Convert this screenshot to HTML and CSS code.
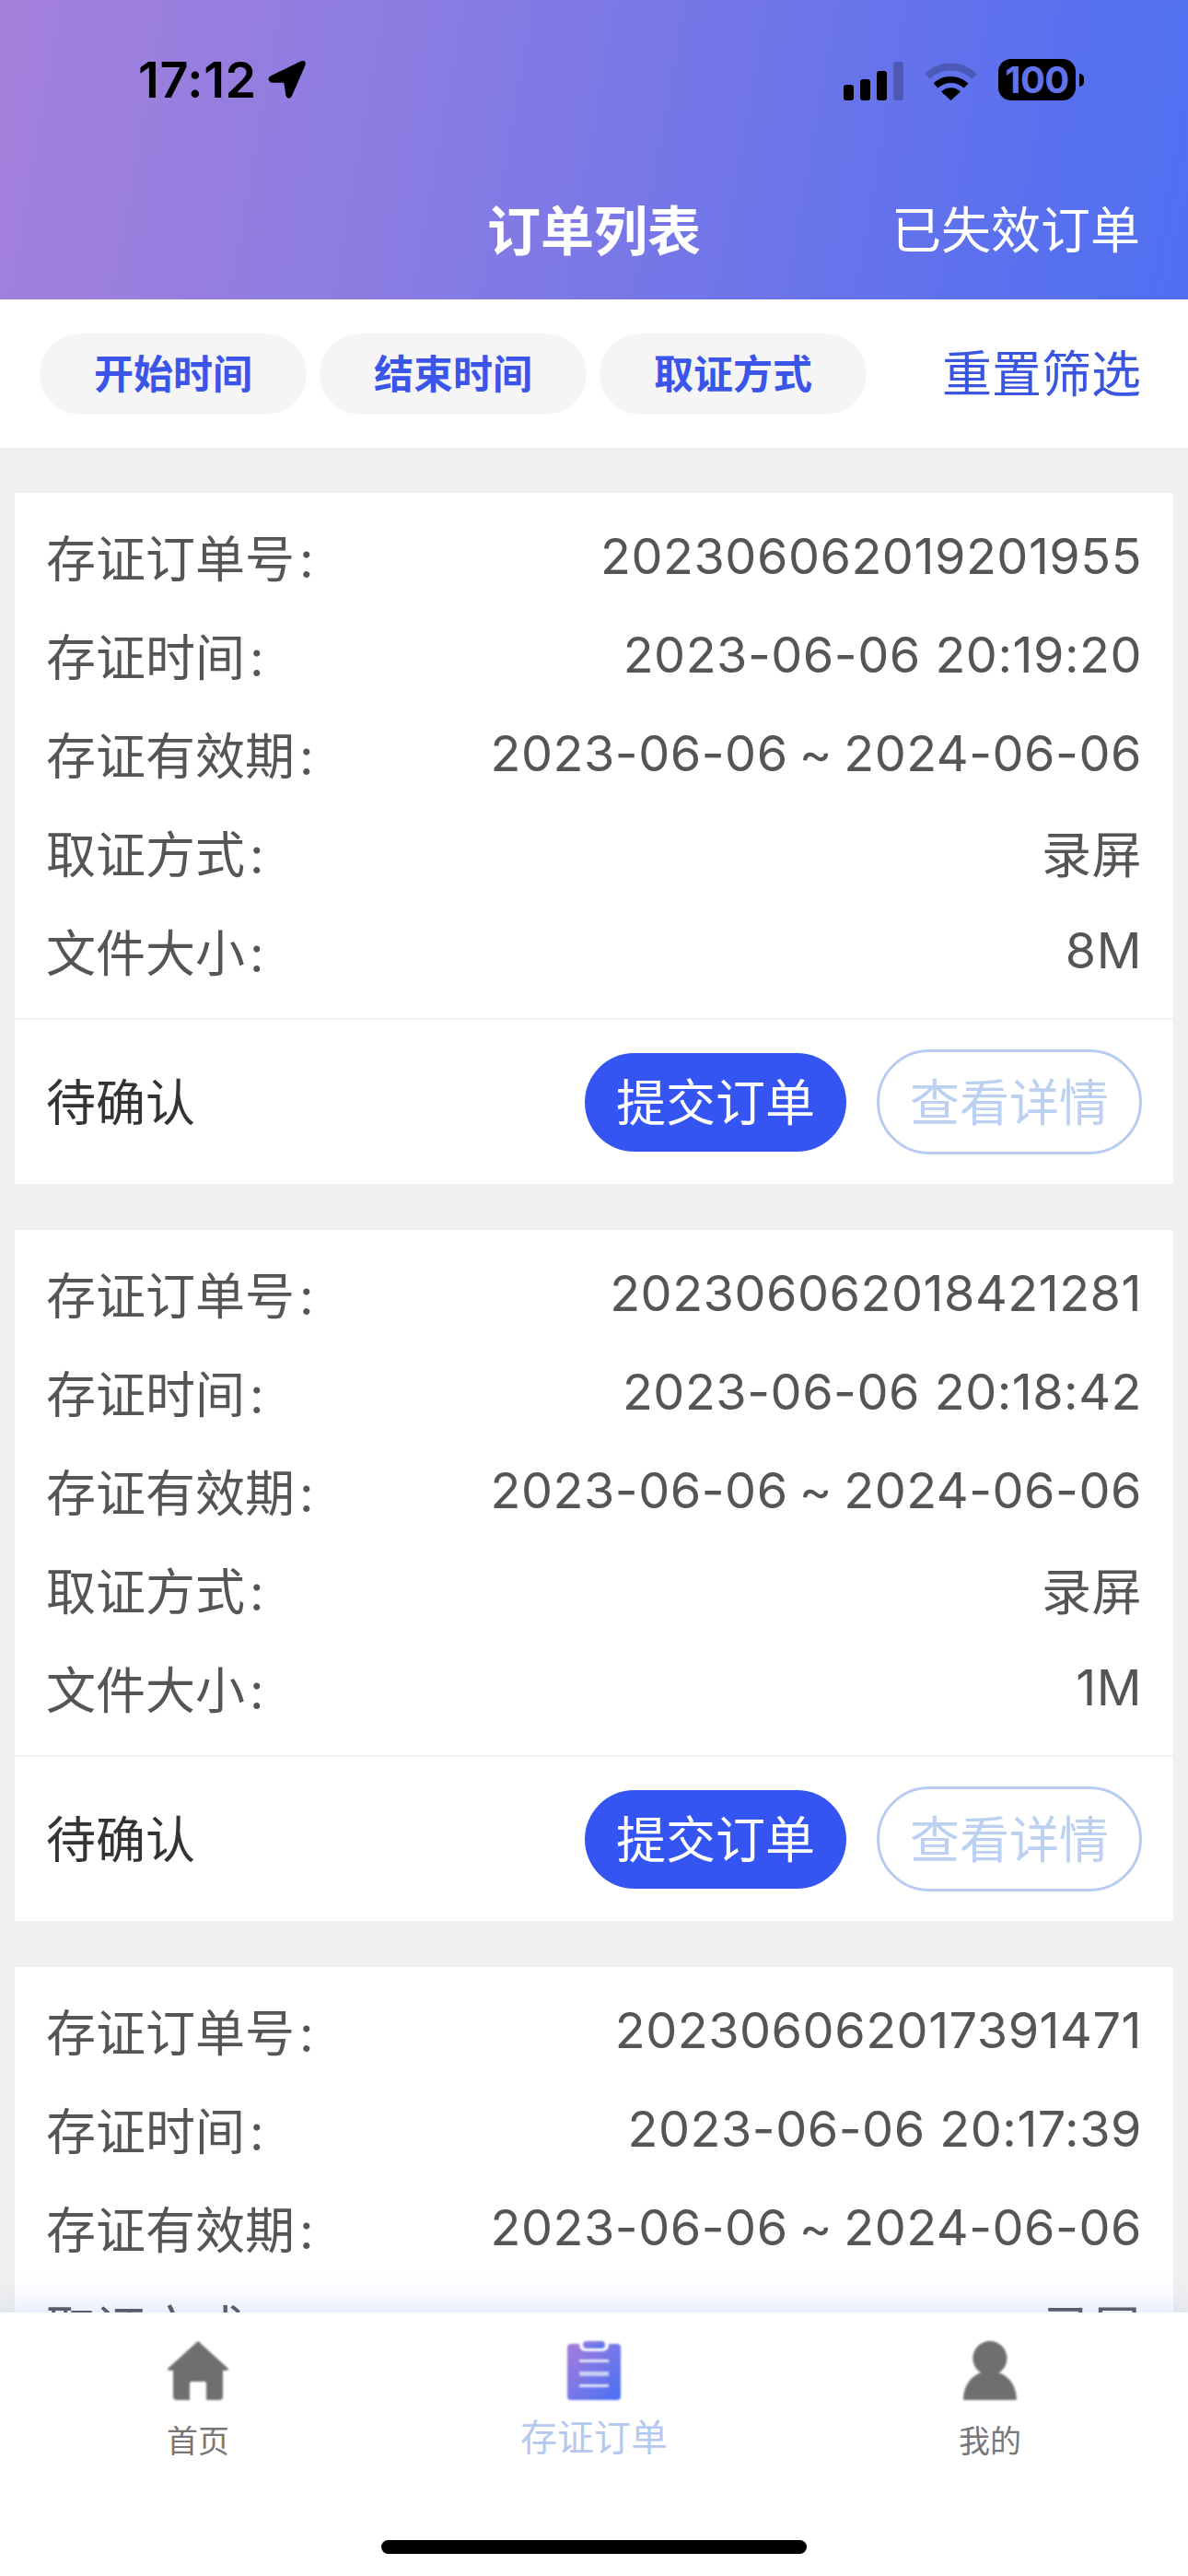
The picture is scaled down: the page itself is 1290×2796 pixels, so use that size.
FILE: index.html
```html
<!DOCTYPE html>
<html lang="zh-CN">
<head>
<meta charset="utf-8">
<title>订单列表</title>
<link rel="stylesheet" href="styles.css">
</head>
<body>
<div class="app">
  <header class="header">
    <div class="status">
      <div class="status-left">
        <span class="time">17:12</span>
        <svg class="arrow" viewBox="0 0 40 40"><path d="M3 16.5 L34 1.5 Q40 -0.5 38.5 5.5 L25 36.5 Q21.5 41.5 19 36 L17 23 L4.5 23 Q-1 20.5 3 16.5Z"/></svg>
      </div>
      <div class="status-right">
        <div class="signal">
          <i class="bar b1"></i><i class="bar b2"></i><i class="bar b3"></i><i class="bar b4"></i>
        </div>
        <svg class="wifi" viewBox="0 0 57 42"><path class="wifi-off" d="M3 16 A36 36 0 0 1 54 16"/><path class="wifi-on" d="M12 26 A24 24 0 0 1 45 26"/><path d="M28.5 42 L18 32.5 A15 15 0 0 1 39 32.5 Z"/></svg>
        <div class="battery"><span class="battery-body">100</span><i class="battery-tip"></i></div>
      </div>
    </div>
    <div class="nav">
      <span></span>
      <h1 class="title">订单列表</h1>
      <a class="nav-link">已失效订单</a>
    </div>
  </header>

  <div class="filters">
    <div class="pills">
      <button class="pill">开始时间</button>
      <button class="pill">结束时间</button>
      <button class="pill">取证方式</button>
    </div>
    <a class="reset">重置筛选</a>
  </div>

  <main class="list">
    <article class="card">
      <div class="rows">
        <div class="row"><span>存证订单号<b class="colon">:</b></span><span class="val">202306062019201955</span></div>
        <div class="row"><span>存证时间<b class="colon">:</b></span><span class="val">2023-06-06 20:19:20</span></div>
        <div class="row"><span>存证有效期<b class="colon">:</b></span><span class="val">2023-06-06 <span class="tilde">~</span> 2024-06-06</span></div>
        <div class="row"><span>取证方式<b class="colon">:</b></span><span class="val">录屏</span></div>
        <div class="row"><span>文件大小<b class="colon">:</b></span><span class="val">8M</span></div>
      </div>
      <div class="foot">
        <span class="state">待确认</span>
        <div class="actions"><button class="btn primary">提交订单</button><button class="btn ghost">查看详情</button></div>
      </div>
    </article>
    <article class="card">
      <div class="rows">
        <div class="row"><span>存证订单号<b class="colon">:</b></span><span class="val">202306062018421281</span></div>
        <div class="row"><span>存证时间<b class="colon">:</b></span><span class="val">2023-06-06 20:18:42</span></div>
        <div class="row"><span>存证有效期<b class="colon">:</b></span><span class="val">2023-06-06 <span class="tilde">~</span> 2024-06-06</span></div>
        <div class="row"><span>取证方式<b class="colon">:</b></span><span class="val">录屏</span></div>
        <div class="row"><span>文件大小<b class="colon">:</b></span><span class="val">1M</span></div>
      </div>
      <div class="foot">
        <span class="state">待确认</span>
        <div class="actions"><button class="btn primary">提交订单</button><button class="btn ghost">查看详情</button></div>
      </div>
    </article>
    <article class="card">
      <div class="rows">
        <div class="row"><span>存证订单号<b class="colon">:</b></span><span class="val">202306062017391471</span></div>
        <div class="row"><span>存证时间<b class="colon">:</b></span><span class="val">2023-06-06 20:17:39</span></div>
        <div class="row"><span>存证有效期<b class="colon">:</b></span><span class="val">2023-06-06 <span class="tilde">~</span> 2024-06-06</span></div>
        <div class="row"><span>取证方式<b class="colon">:</b></span><span class="val">录屏</span></div>
      </div>
    </article>
  </main>

  <nav class="tabbar">
    <div class="tabs">
      <div class="tab">
        <svg class="tab-icon" viewBox="0 0 66 64"><path d="M33 0 L66 30 Q66 32 63 32 L60 32 L60 60 Q60 64 56 64 L42 64 L42 46 Q42 44 40 44 L26 44 Q24 44 24 46 L24 64 L10 64 Q6 64 6 60 L6 32 L3 32 Q0 32 0 30Z"/></svg>
        <span class="tab-label">首页</span>
      </div>
      <div class="tab">
        <svg class="tab-icon" viewBox="0 0 58 64">
          <defs><linearGradient id="clip" x1="0" y1="0" x2="1" y2="1"><stop offset="0" stop-color="#a67edb"/><stop offset="1" stop-color="#4670f5"/></linearGradient></defs>
          <rect x="17" y="0" width="24" height="8" rx="4" fill="url(#clip)"/>
          <path fill="url(#clip)" d="M4 3 L13 3 Q13 11 20 11 L38 11 Q45 11 45 3 L54 3 Q58 3 58 7 L58 60 Q58 64 54 64 L4 64 Q0 64 0 60 L0 7 Q0 3 4 3Z"/>
          <rect x="13" y="20" width="32" height="3" fill="#e3e6fa"/><rect x="13" y="33" width="32" height="5" fill="#c9d0f5"/><rect x="13" y="47" width="32" height="3" fill="#e3e6fa"/>
        </svg>
        <span class="tab-label active">存证订单</span>
      </div>
      <div class="tab">
        <svg class="tab-icon" viewBox="0 0 56 62"><circle cx="28" cy="18" r="18"/><path d="M0 62 C0 44 12 34 21 33 L35 33 C44 34 56 44 56 62Z"/></svg>
        <span class="tab-label">我的</span>
      </div>
    </div>
    <div class="home-bar"></div>
  </nav>
</div>
</body>
</html>
```
FILE: styles.css
```css
* { box-sizing: border-box; }
html, body { margin: 0; padding: 0; }
body { font-family: Inter, "Noto Sans CJK SC", sans-serif; background: #f0f0f0; }
.app { width: 1290px; height: 2796px; display: flex; flex-direction: column; overflow: hidden; }

.header { height: 325px; flex: none; background: linear-gradient(100deg, #a580dc 0%, #8a7ce2 35%, #5a70ee 85%, #4f70f2 100%); padding-top: 64px; }
.status { display: flex; justify-content: space-between; align-items: center; height: 45px; padding: 0 113px 0 150px; color: #000; }
.status-left { display: flex; align-items: center; gap: 11px; }
.time { font-size: 54px; font-weight: 600; line-height: 45px; letter-spacing: .6px; }
.arrow { width: 43px; height: 43px; fill: #000; }
.status-right { display: flex; align-items: flex-end; gap: 23px; height: 45px; }
.signal { display: flex; align-items: flex-end; gap: 7px; height: 42px; }
.bar { width: 11px; background: #000; border-radius: 3px; display: block; }
.b1 { height: 17px; } .b2 { height: 23px; } .b3 { height: 32px; } .b4 { height: 42px; opacity: .22; }
.wifi { width: 57px; height: 42px; fill: #000; }
.wifi-off { fill: none; stroke: #000; stroke-width: 8; opacity: .22; }
.wifi-on { fill: none; stroke: #000; stroke-width: 7; }
.battery { display: flex; align-items: center; gap: 4px; }
.battery-body { width: 84px; height: 45px; background: #000; border-radius: 14px; color: #6272ea; font-size: 40px; font-weight: 700; text-align: center; line-height: 45px; letter-spacing: -.5px; }
.battery-tip { width: 5px; height: 14px; background: #000; border-radius: 0 7px 7px 0; display: block; }

.nav { display: grid; grid-template-columns: 1fr auto 1fr; align-items: center; margin-top: 112px; padding-right: 52px; height: 60px; color: #fff; }
.title { margin: 0 0 0 52px; font-size: 58px; font-weight: 700; line-height: 60px; }
.nav-link { justify-self: end; font-size: 54px; line-height: 60px; }

.filters { height: 161px; flex: none; background: #fff; display: flex; align-items: center; justify-content: space-between; padding: 0 51px 0 43px; }
.pills { display: flex; gap: 14px; }
.pill { width: 290px; height: 88px; border: 0; border-radius: 44px; background: #f5f5f5; color: #3a55e8; font: 700 43px Inter, "Noto Sans CJK SC", sans-serif; padding: 0 0 5px; }
.reset { color: #3a55e0; font-size: 54px; margin-bottom: 6px; }

.list { flex: 1; min-height: 0; overflow: hidden; padding: 49px 16px 0; display: flex; flex-direction: column; gap: 50px; }
.card { flex: none; background: #fff; }
.rows { padding-top: 15px; height: 570px; }
.row { height: 107px; display: flex; align-items: center; justify-content: space-between; padding: 0 34px; font-size: 54px; color: #555; }
.colon { font-weight: 400; margin-left: 5px; }
.val { font-size: 54px; letter-spacing: .5px; }
.tilde { margin: 0 -3.5px; }
.foot { height: 180px; border-top: 2px solid #f0f0f0; display: flex; align-items: center; justify-content: space-between; padding: 0 34px; }
.state { font-size: 54px; color: #333; margin-bottom: 6px; }
.actions { display: flex; align-items: center; gap: 33px; }
.btn { padding: 0 0 5px; border-radius: 60px; font: 400 54px Inter, "Noto Sans CJK SC", sans-serif; }
.primary { width: 284px; height: 107px; border: 0; background: #3555f2; color: #fff; }
.ghost { width: 288px; height: 114px; border: 3px solid #b8ccf0; background: #fff; color: #bcd0f2; }

.tabbar { flex: none; height: 286px; background: #fff; box-shadow: 0 -8px 30px rgba(120,150,240,.22); position: relative; padding-top: 31px; }
.tabs { display: grid; grid-template-columns: repeat(3, 430px); height: 216px; }
.tab { display: flex; flex-direction: column; align-items: center; }
.tab-icon { height: 64px; width: auto; fill: #6f6f6f; filter: blur(.8px); }
.tab-label { font-size: 34px; line-height: 48px; margin-top: 21px; color: #777; }
.tab-label.active { font-size: 40px; margin-top: 17px; color: #b4c8f0; }
.home-bar { width: 462px; height: 15px; border-radius: 8px; background: #000; margin: 0 auto; }
```
